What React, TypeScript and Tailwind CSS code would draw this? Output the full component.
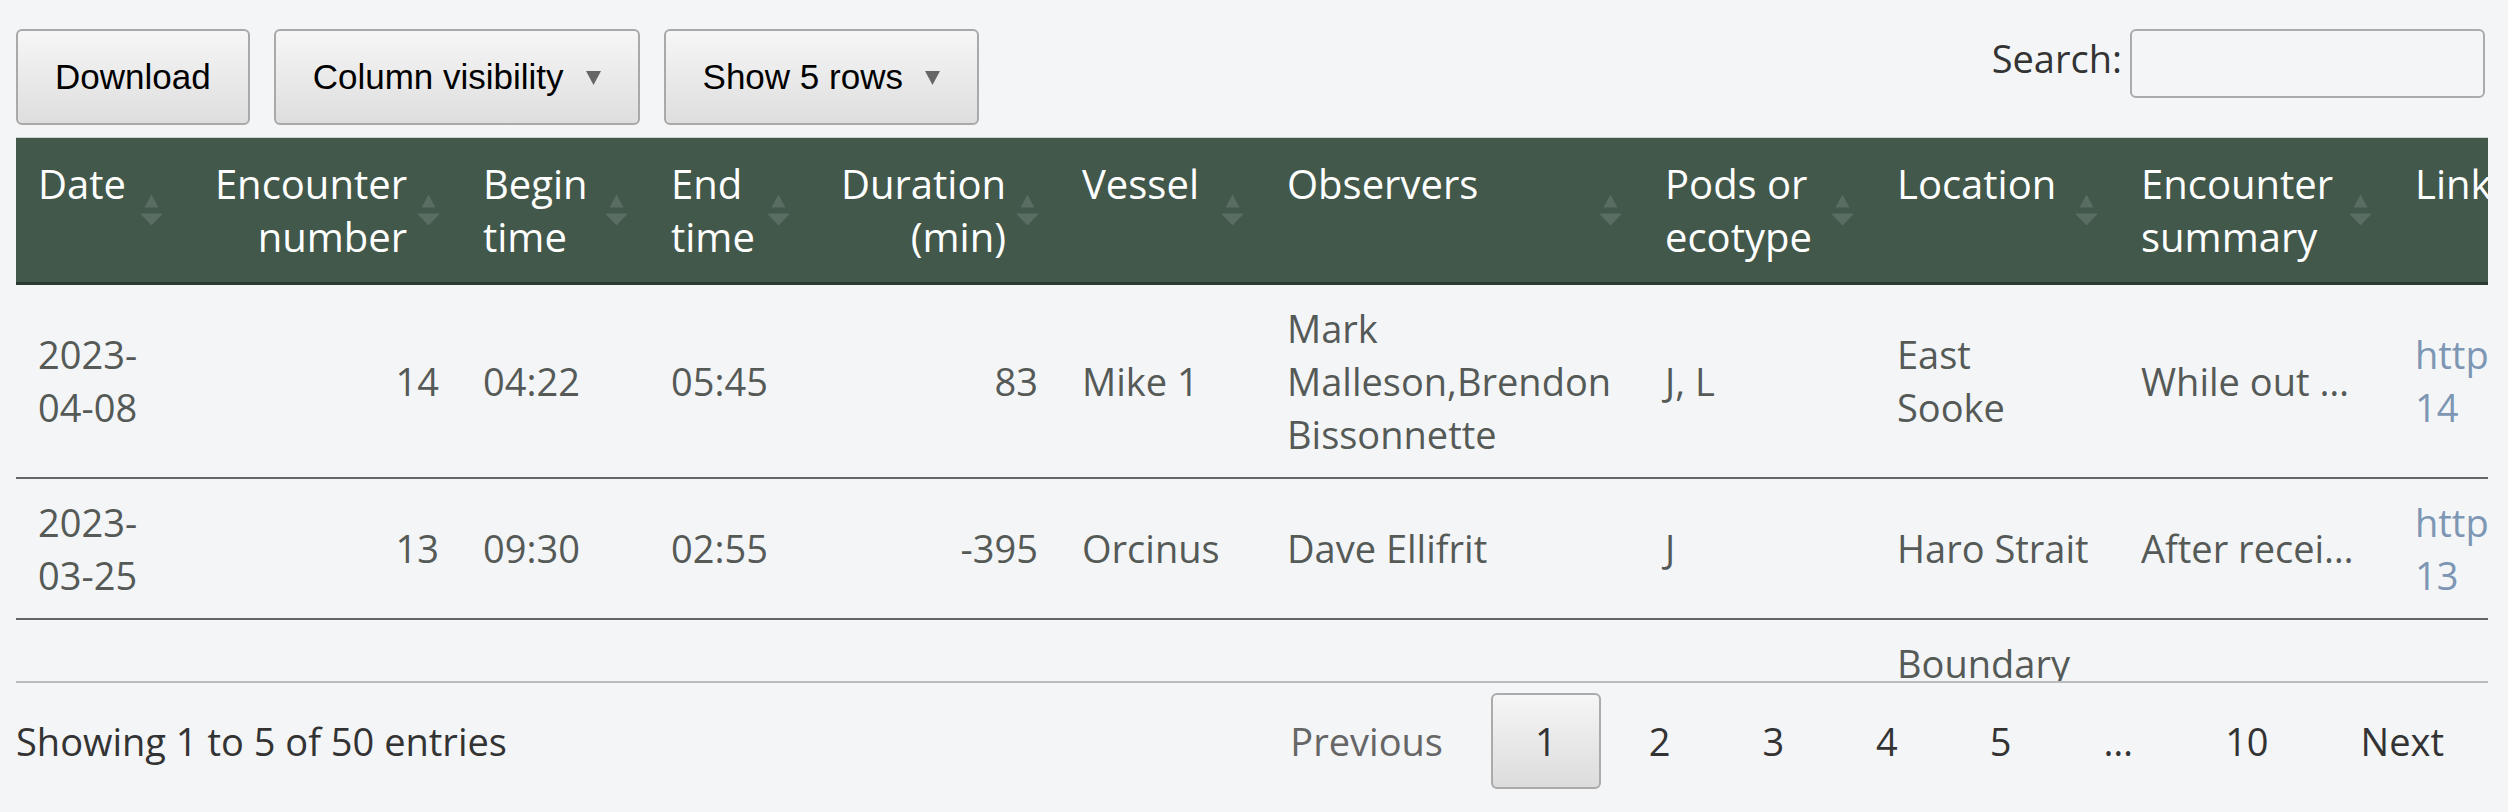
import { ReactNode } from 'react';

interface Column {
  key: string;
  label: string[];
  width: string;
  numeric?: boolean;
  sortable?: boolean;
}

const columns: Column[] = [
  { key: 'date', label: ['Date'], width: 'w-[168px]' },
  { key: 'number', label: ['Encounter', 'number'], width: 'w-[277px]', numeric: true },
  { key: 'begin', label: ['Begin', 'time'], width: 'w-[188px]' },
  { key: 'end', label: ['End', 'time'], width: 'w-[162px]' },
  { key: 'duration', label: ['Duration', '(min)'], width: 'w-[249px]', numeric: true },
  { key: 'vessel', label: ['Vessel'], width: 'w-[205px]' },
  { key: 'observers', label: ['Observers'], width: 'w-[378px]' },
  { key: 'pods', label: ['Pods or', 'ecotype'], width: 'w-[232px]' },
  { key: 'location', label: ['Location'], width: 'w-[244px]' },
  { key: 'summary', label: ['Encounter', 'summary'], width: 'w-[274px]' },
  { key: 'link', label: ['Link'], width: 'w-[400px]', sortable: false },
];

type Row = Record<string, string[]>;

const rows: Row[] = [
  {
    date: ['2023-', '04-08'],
    number: ['14'],
    begin: ['04:22'],
    end: ['05:45'],
    duration: ['83'],
    vessel: ['Mike 1'],
    observers: ['Mark', 'Malleson,Brendon', 'Bissonnette'],
    pods: ['J, L'],
    location: ['East', 'Sooke'],
    summary: ['While out on the water this morning'],
    link: ['https://www.whaleresearch.com/2023-', '14'],
  },
  {
    date: ['2023-', '03-25'],
    number: ['13'],
    begin: ['09:30'],
    end: ['02:55'],
    duration: ['-395'],
    vessel: ['Orcinus'],
    observers: ['Dave Ellifrit'],
    pods: ['J'],
    location: ['Haro Strait'],
    summary: ['After receiving a report of whales'],
    link: ['https://www.whaleresearch.com/2023-', '13'],
  },
  {
    date: ['2023-', '03-19'],
    number: ['12'],
    begin: ['11:05'],
    end: ['13:40'],
    duration: ['155'],
    vessel: ['Orcinus'],
    observers: ['Dave Ellifrit'],
    pods: ['J'],
    location: ['Boundary', 'Pass,', 'Saturna', 'Island'],
    summary: ['Just after noon we received'],
    link: ['https://www.whaleresearch.com/2023-', '12'],
  },
];

function SortIcon() {
  return (
    <svg width="23" height="31" viewBox="0 0 23 31" className="absolute right-[21px] top-1/2 -translate-y-1/2">
      <polygon points="11.5,0 4.5,13 18.5,13" fill="#ffffff" fillOpacity="0.13" />
      <polygon points="0,19 23,19 11.5,31" fill="#ffffff" fillOpacity="0.13" />
    </svg>
  );
}

function Caret() {
  return (
    <svg width="15" height="15" viewBox="0 0 15 15" className="ml-[22px]">
      <polygon points="0,1 15,1 7.5,15" fill="#666666" />
    </svg>
  );
}

function ToolButton({ children }: { children: ReactNode }) {
  return (
    <button className="flex h-[96px] items-center rounded-[6px] border-2 border-[#a9a9a9] bg-linear-to-b from-[#f6f6f6] to-[#dedede] px-[37px] font-['Liberation_Sans',Arial,sans-serif] text-[35px] text-black">
      {children}
    </button>
  );
}

function Colgroup() {
  return (
    <colgroup>
      {columns.map((col) => (
        <col key={col.key} className={col.width} />
      ))}
    </colgroup>
  );
}

function PageButton({ children, current, muted }: { children: ReactNode; current?: boolean; muted?: boolean }) {
  return (
    <span
      className={
        'ml-[4px] flex h-[96px] items-center rounded-[6px] border-2 px-[42px] ' +
        (current
          ? 'border-[#ababab] bg-linear-to-b from-[#f6f6f6] to-[#dcdcdc] text-[#333]'
          : muted
            ? 'border-transparent text-[#666]'
            : 'border-transparent text-[#333]')
      }
    >
      {children}
    </span>
  );
}

export default function App() {
  return (
    <div className="min-h-screen bg-[#f4f5f7] pl-[16px] pr-[20px] font-['Open_Sans',sans-serif]">
      <div className="flex items-start justify-between pt-[29px] pr-[3px]">
        <div className="flex gap-[24px]">
          <ToolButton>Download</ToolButton>
          <ToolButton>
            Column visibility
            <Caret />
          </ToolButton>
          <ToolButton>
            Show 5 rows
            <Caret />
          </ToolButton>
        </div>
        <label className="flex items-center text-[38px] text-[#333]">
          <span className="mt-[-10px]">Search:</span>
          <input className="ml-[8px] h-[69px] w-[355px] rounded-[6px] border-2 border-[#ababab] bg-transparent" />
        </label>
      </div>

      <div className="mt-[12px] overflow-hidden">
        <table className="w-[2777px] table-fixed border-collapse">
          <Colgroup />
          <thead>
            <tr className="border-t border-b-[3px] border-t-[#cfd3d0] border-b-[#2e3b33] bg-[#42584b]">
              {columns.map((col) => (
                <th
                  key={col.key}
                  className={
                    'relative pt-[19px] pb-[19px] pl-[22px] pr-[54px] align-top text-[40px] leading-[53px] font-medium text-white ' +
                    (col.numeric ? 'text-right' : 'text-left')
                  }
                >
                  {col.label.map((line) => (
                    <span key={line} className="block whitespace-nowrap">
                      {line}
                    </span>
                  ))}
                  {col.sortable !== false && <SortIcon />}
                </th>
              ))}
            </tr>
          </thead>
        </table>
      </div>

      <div className="h-[398px] overflow-hidden border-b-2 border-[#bcbcbc]">
        <table className="w-[2777px] table-fixed border-collapse">
          <Colgroup />
          <tbody>
            {rows.map((row, i) => (
              <tr key={i} className="border-b-2 border-[#60656a]">
                {columns.map((col) => (
                  <td
                    key={col.key}
                    className={
                      'px-[22px] py-[16.5px] align-middle text-[38px] leading-[53px] ' +
                      (col.numeric ? 'text-right ' : 'text-left ') +
                      (col.key === 'link' ? 'text-[#7d96b3]' : 'text-[#555a57]')
                    }
                  >
                    {col.key === 'summary' ? (
                      <span className="block overflow-hidden text-ellipsis whitespace-nowrap">{row[col.key][0]}</span>
                    ) : (
                      row[col.key].map((line, j) => (
                        <span key={j} className="block whitespace-nowrap">
                          {line}
                        </span>
                      ))
                    )}
                  </td>
                ))}
              </tr>
            ))}
          </tbody>
        </table>
      </div>

      <div className="mt-[10px] flex items-center justify-between text-[38px]">
        <span className="text-[#333]">Showing 1 to 5 of 50 entries</span>
        <div className="flex items-center">
          <PageButton muted>Previous</PageButton>
          <PageButton current>1</PageButton>
          <PageButton>2</PageButton>
          <PageButton>3</PageButton>
          <PageButton>4</PageButton>
          <PageButton>5</PageButton>
          <span className="ml-[4px] px-[44px] text-[#333]">…</span>
          <PageButton>10</PageButton>
          <PageButton>Next</PageButton>
        </div>
      </div>
    </div>
  );
}
